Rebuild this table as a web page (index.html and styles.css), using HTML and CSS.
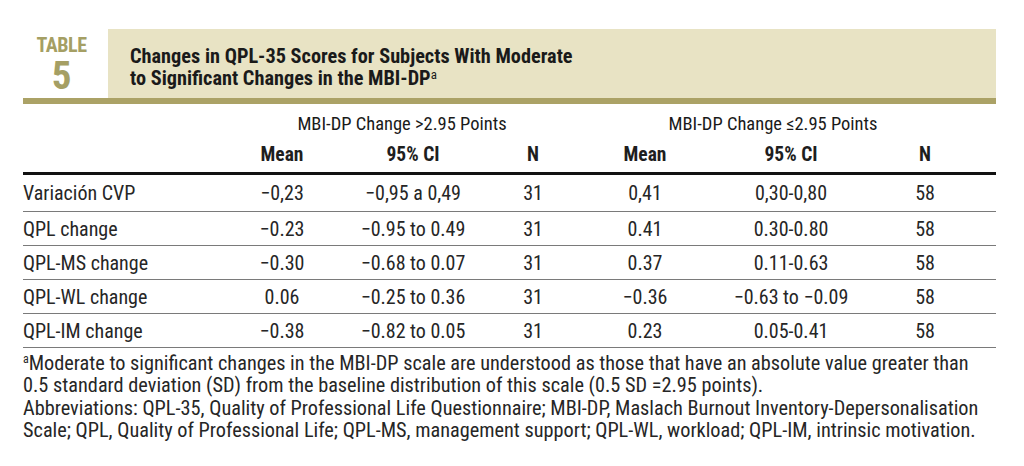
FILE: index.html
```html
<!DOCTYPE html>
<html lang="en">
<head>
<meta charset="utf-8">
<title>Table 5</title>
<link rel="stylesheet" href="styles.css">
</head>
<body>
<div class="page">
  <header class="caption">
    <div class="label">
      <span class="label-word">TABLE</span>
      <span class="label-num">5</span>
    </div>
    <h1 class="title">Changes in QPL-35 Scores for Subjects With Moderate<br>to Significant Changes in the MBI-DP<sup>a</sup></h1>
  </header>
  <table class="data">
    <colgroup>
      <col class="c-label"><col class="c-mean"><col class="c-ci"><col class="c-n"><col class="c-mean2"><col class="c-ci2"><col class="c-n2"><col class="c-end">
    </colgroup>
    <thead>
      <tr class="group-row">
        <th></th>
        <th colspan="3">MBI-DP Change &gt;2.95 Points</th>
        <th colspan="3" class="group-2">MBI-DP Change &le;2.95 Points</th>
        <th></th>
      </tr>
      <tr class="head-row">
        <th></th>
        <th>Mean</th><th>95% CI</th><th>N</th>
        <th>Mean</th><th>95% CI</th><th>N</th>
        <th></th>
      </tr>
    </thead>
    <tbody>
      <tr class="first"><td>Variación CVP</td><td>−0,23</td><td>−0,95 a 0,49</td><td>31</td><td>0,41</td><td>0,30-0,80</td><td>58</td><td></td></tr>
      <tr><td>QPL change</td><td>−0.23</td><td>−0.95 to 0.49</td><td>31</td><td>0.41</td><td>0.30-0.80</td><td>58</td><td></td></tr>
      <tr><td>QPL-MS change</td><td>−0.30</td><td>−0.68 to 0.07</td><td>31</td><td>0.37</td><td>0.11-0.63</td><td>58</td><td></td></tr>
      <tr><td>QPL-WL change</td><td>0.06</td><td>−0.25 to 0.36</td><td>31</td><td>−0.36</td><td>−0.63 to −0.09</td><td>58</td><td></td></tr>
      <tr><td>QPL-IM change</td><td>−0.38</td><td>−0.82 to 0.05</td><td>31</td><td>0.23</td><td>0.05-0.41</td><td>58</td><td></td></tr>
    </tbody>
  </table>
  <div class="notes">
    <p><sup>a</sup>Moderate to significant changes in the MBI-DP scale are understood as those that have an absolute value greater than<br>0.5 standard deviation (SD) from the baseline distribution of this scale (0.5 SD =2.95 points).</p>
    <p>Abbreviations: QPL-35, Quality of Professional Life Questionnaire; MBI-DP, Maslach Burnout Inventory-Depersonalisation<br>Scale; QPL, Quality of Professional Life; QPL-MS, management support; QPL-WL, workload; QPL-IM, intrinsic motivation.</p>
  </div>
</div>
</body>
</html>
```

FILE: styles.css
```css
html, body {
  margin: 0;
  padding: 0;
  background: #ffffff;
}
body {
  font-family: "Roboto Condensed", "Roboto", "Liberation Sans", sans-serif;
  font-stretch: condensed;
  color: #1e1e1e;
}
.page {
  width: 973px;
  margin-left: 23px;
  padding-top: 29px;
}
.caption {
  display: flex;
  height: 69px;
  border-bottom: 6px solid #aba266;
}
.label {
  width: 77px;
  padding-right: 8px;
  flex: none;
  display: flex;
  flex-direction: column;
  align-items: center;
  padding-top: 8px;
  color: #a59f64;
  font-weight: bold;
}
.label-word {
  font-size: 20px;
  line-height: 17px;
  letter-spacing: -0.4px;
}
.label-num {
  font-size: 39px;
  line-height: 40px;
  margin-top: 2px;
}
.title {
  flex: 1;
  margin: 0;
  background: #e8e3c4;
  padding: 16px 0 0 22px;
  font-size: 20.3px;
  line-height: 22px;
  font-weight: bold;
  color: #1a1a1a;
}
.title sup {
  font-size: 13px;
  font-weight: normal;
  vertical-align: 6px;
  line-height: 0;
}
.data {
  width: 973px;
  border-collapse: collapse;
  table-layout: fixed;
  font-size: 20px;
}
.c-label { width: 197px; }
.c-mean { width: 124px; }
.c-ci { width: 138px; }
.c-n { width: 102px; }
.c-mean2 { width: 122px; }
.c-ci2 { width: 170px; }
.c-n2 { width: 98px; }
.c-end { width: 22px; }
.data th, .data td {
  padding: 0;
  text-align: center;
  vertical-align: middle;
}
.group-row th {
  height: 35px;
  padding-top: 2px;
  font-weight: normal;
  font-size: 18.5px;
  color: #1a1a1a;
}
.group-row .group-2 {
  padding-right: 12px;
}
.head-row th {
  height: 27px;
  padding-bottom: 4px;
  font-weight: bold;
  font-size: 19.5px;
  border-bottom: 3px solid #111111;
}
.data tbody td {
  height: 33px;
  border-bottom: 1px solid #7a7a7a;
  color: #262626;
}
.data tbody .first td {
  height: 36px;
}
.data tbody td:first-child {
  text-align: left;
}
.notes {
  padding-top: 4px;
  font-size: 20.3px;
  line-height: 22.4px;
  color: #262626;
}
.notes p {
  margin: 0;
  white-space: nowrap;
}
.notes sup {
  font-size: 12px;
  vertical-align: 7px;
  line-height: 0;
}
```
